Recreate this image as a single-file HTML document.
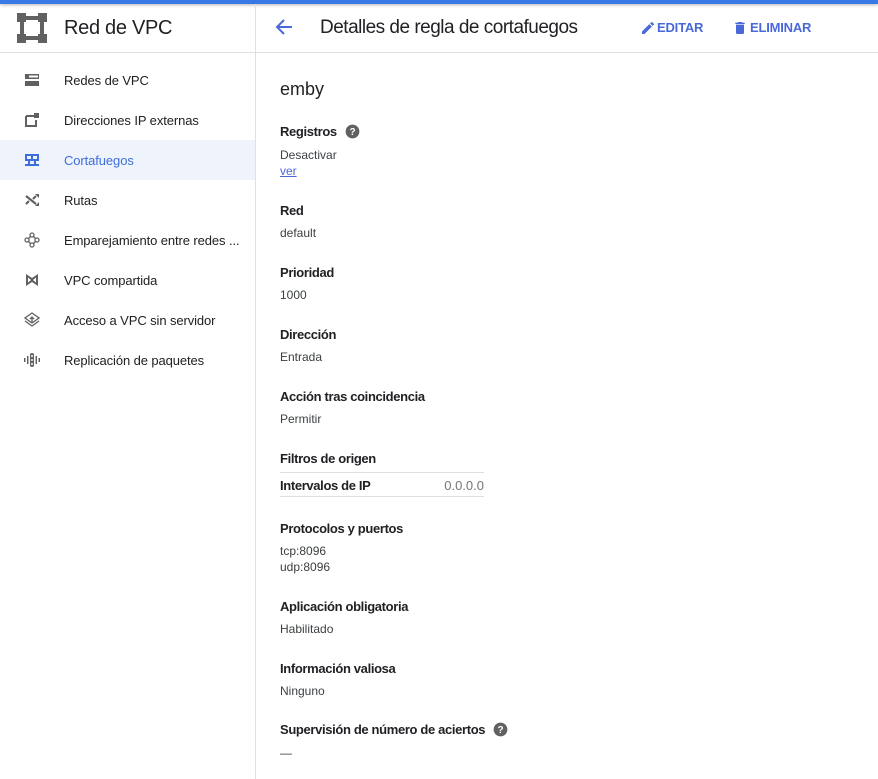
<!DOCTYPE html>
<html><head><meta charset="utf-8"><style>
*{margin:0;padding:0;box-sizing:border-box}
body{width:878px;height:779px;overflow:hidden;background:#fff;font-family:"Liberation Sans",Arial,sans-serif;color:#212121;position:relative}
.topbar{position:absolute;left:0;top:0;width:878px;height:4px;background:#3b78e7;box-shadow:0 1px 3px rgba(0,0,0,.3)}
.side{position:absolute;left:0;top:4px;width:256px;height:775px;border-right:1px solid #e0e0e0}
.sidehead{height:49px;border-bottom:1px solid #e0e0e0;position:relative}
.sidehead .t{position:absolute;left:64px;top:13px;font-size:20px;color:#202124;letter-spacing:-.3px}
.item{position:absolute;left:0;width:255px;height:40px;font-size:13px;color:#202124;letter-spacing:-.1px}
.item span{position:absolute;left:64px;top:13px}
.item svg{position:absolute;left:24px;top:12px}
.item.sel{background:#eef3fc;color:#3c6edc}
.main{position:absolute;left:256px;top:4px;right:0;height:49px;border-bottom:1px solid #e0e0e0}
.h1{position:absolute;left:64px;top:13px;font-size:19px;color:#202124;letter-spacing:-.5px}
.btn{position:absolute;top:16px;font-size:13px;font-weight:bold;color:#4a68d8;letter-spacing:-.2px}
.lbl{position:absolute;left:280px;font-size:13px;font-weight:bold;color:#202124;letter-spacing:-.35px;display:flex;align-items:center}
.lbl svg{margin-left:8px}
.val{position:absolute;left:280px;font-size:12px;color:#3c4043;line-height:16px}
</style></head><body>
<div class="topbar"></div>
<div class="side">
 <div class="sidehead">
  <svg style="position:absolute;left:17px;top:9px" width="30" height="30" viewBox="0 0 30 30"><g fill="#616161"><rect x="0" y="0" width="9" height="9"/><rect x="21" y="0" width="9" height="9"/><rect x="0" y="21" width="9" height="9"/><rect x="21" y="21" width="9" height="9"/><rect x="3" y="8" width="4" height="14"/><rect x="23" y="8" width="4" height="14"/><rect x="8" y="3" width="14" height="4"/><rect x="8" y="23" width="14" height="4"/></g></svg>
  <div class="t">Red de VPC</div>
 </div>
</div>
<div class="item" style="top:60px"><svg width="16" height="16" viewBox="0 0 16 16"><g fill="#616161"><rect x="1" y="2" width="14" height="5"/><rect x="1" y="9" width="14" height="5"/></g><rect x="5" y="3.5" width="9" height="2" fill="#fff"/></svg><span>Redes de VPC</span></div>
<div class="item" style="top:100px"><svg width="16" height="16" viewBox="0 0 16 16"><path d="M2 4h8M2 4v10h10V8" stroke="#616161" stroke-width="2" fill="none"/><rect x="10" y="1" width="5" height="5" fill="#616161"/></svg><span>Direcciones IP externas</span></div>
<div class="item sel" style="top:140px"><svg width="16" height="16" viewBox="0 0 16 16"><g fill="#3c6edc"><rect x="1" y="2" width="14" height="2"/><rect x="1" y="7" width="14" height="2"/><rect x="1" y="12" width="14" height="2"/><rect x="1" y="4" width="2" height="3"/><rect x="7" y="4" width="2" height="3"/><rect x="13" y="4" width="2" height="3"/><rect x="4" y="9" width="2" height="3"/><rect x="10" y="9" width="2" height="3"/></g></svg><span>Cortafuegos</span></div>
<div class="item" style="top:180px"><svg width="16" height="16" viewBox="0 0 16 16"><path d="M2 4l10 8M2 12l3-3M9 7l3-3" stroke="#616161" stroke-width="2.2" fill="none"/><path d="M11 2h4v4zM11 14h4v-4z" fill="#616161"/></svg><span>Rutas</span></div>
<div class="item" style="top:220px"><svg width="16" height="16" viewBox="0 0 16 16"><g fill="none" stroke="#616161" stroke-width="1.3"><circle cx="8" cy="3" r="2"/><circle cx="8" cy="13" r="2"/><circle cx="3" cy="8" r="2"/><circle cx="13" cy="8" r="2"/><path d="M6.5 4.5l-2 2M9.5 4.5l2 2M6.5 11.5l-2-2M9.5 11.5l2-2"/></g></svg><span>Emparejamiento entre redes ...</span></div>
<div class="item" style="top:260px"><svg width="16" height="16" viewBox="0 0 16 16"><path d="M2 2v12l6-4 6 4V2L8 6z" fill="#616161"/><path d="M4 5.5v5L7 8zM12 5.5v5L9 8z" fill="#fff"/></svg><span>VPC compartida</span></div>
<div class="item" style="top:300px"><svg width="16" height="16" viewBox="0 0 16 16"><g fill="none" stroke="#616161" stroke-width="1.3"><path d="M8 1l7 5-7 5-7-5z"/><path d="M1 9l7 5 7-5"/><path d="M8 5v5M6 7l2-2 2 2"/></g></svg><span>Acceso a VPC sin servidor</span></div>
<div class="item" style="top:340px"><svg width="16" height="16" viewBox="0 0 16 16"><g fill="#616161"><rect x="0" y="6" width="1.5" height="4"/><rect x="3" y="4" width="1.5" height="8"/><rect x="6" y="1" width="4" height="14" rx="2"/><rect x="11.5" y="4" width="1.5" height="8"/><rect x="14.5" y="6" width="1.5" height="4"/></g><g fill="#fff"><circle cx="8" cy="4" r="1"/><circle cx="8" cy="8" r="1"/><circle cx="8" cy="12" r="1"/></g></svg><span>Replicación de paquetes</span></div>

<div class="main">
 <svg style="position:absolute;left:19px;top:14px" width="18" height="18" viewBox="0 0 18 18"><path d="M17 9H3M9 2L2 9l7 7" stroke="#4a68d8" stroke-width="2" fill="none"/></svg>
 <div class="h1">Detalles de regla de cortafuegos</div>
 <svg style="position:absolute;left:384px;top:16px" width="16" height="16" viewBox="0 0 24 24"><path d="M3 17.25V21h3.75L17.81 9.94l-3.75-3.75L3 17.25zM20.71 7.04a1 1 0 000-1.41l-2.34-2.34a1 1 0 00-1.41 0l-1.83 1.83 3.75 3.75 1.83-1.83z" fill="#4a68d8"/></svg>
 <div class="btn" style="left:401px">EDITAR</div>
 <svg style="position:absolute;left:476px;top:15px" width="16" height="18" viewBox="0 0 24 24"><path d="M6 19a2 2 0 002 2h8a2 2 0 002-2V7H6v12zM19 4h-3.5l-1-1h-5l-1 1H5v2h14V4z" fill="#4a68d8"/></svg>
 <div class="btn" style="left:494px">ELIMINAR</div>
</div>

<div style="position:absolute;left:280px;top:79px;font-size:18px;color:#202124">emby</div>
<div class="lbl" style="top:124px">Registros<svg width="15" height="15" viewBox="0 0 24 24"><circle cx="12" cy="12" r="11" fill="#616161"/><text x="12" y="17.5" font-size="16" font-weight="bold" text-anchor="middle" fill="#fff" font-family="Liberation Sans">?</text></svg></div>
<div class="val" style="top:147px">Desactivar</div>
<div class="val" style="top:163px;color:#4a68d8;text-decoration:underline">ver</div>

<div class="lbl" style="top:203px">Red</div><div class="val" style="top:225px">default</div>
<div class="lbl" style="top:265px">Prioridad</div><div class="val" style="top:287px">1000</div>
<div class="lbl" style="top:327px">Dirección</div><div class="val" style="top:349px">Entrada</div>
<div class="lbl" style="top:389px">Acción tras coincidencia</div><div class="val" style="top:411px">Permitir</div>
<div class="lbl" style="top:451px">Filtros de origen</div>
<div style="position:absolute;left:280px;top:472px;width:204px;height:25px;border-top:1px solid #e0e0e0;border-bottom:1px solid #e0e0e0">
 <div style="position:absolute;left:0;top:5px;font-size:13px;font-weight:bold;color:#202124;letter-spacing:-.35px">Intervalos de IP</div>
 <div style="position:absolute;right:0;top:5px;font-size:13px;color:#757575">0.0.0.0</div>
</div>
<div class="lbl" style="top:521px">Protocolos y puertos</div><div class="val" style="top:543px">tcp:8096<br>udp:8096</div>
<div class="lbl" style="top:599px">Aplicación obligatoria</div><div class="val" style="top:621px">Habilitado</div>
<div class="lbl" style="top:661px">Información valiosa</div><div class="val" style="top:683px">Ninguno</div>
<div class="lbl" style="top:722px">Supervisión de número de aciertos<svg width="15" height="15" viewBox="0 0 24 24"><circle cx="12" cy="12" r="11" fill="#616161"/><text x="12" y="17.5" font-size="16" font-weight="bold" text-anchor="middle" fill="#fff" font-family="Liberation Sans">?</text></svg></div>
<div class="val" style="top:745px">—</div>
</body></html>
